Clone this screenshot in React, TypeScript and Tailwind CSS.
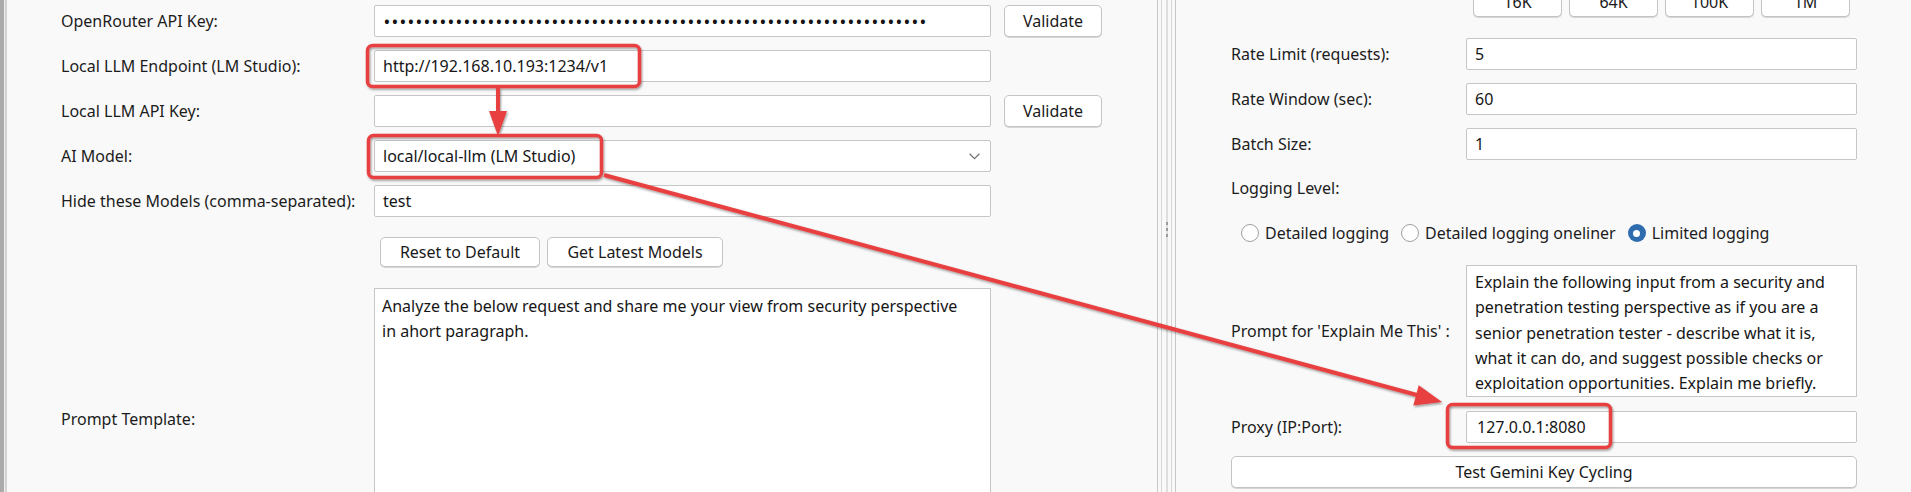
import React from "react";

const Field = ({ value, className = "" }: { value?: string; className?: string }) => (
  <div
    className={`h-[32px] bg-white border border-[#c6c6c6] rounded-[2px] flex items-center pl-[8px] text-[#161616] whitespace-nowrap ${className}`}
  >
    {value}
  </div>
);

const Btn = ({ label, className = "" }: { label: string; className?: string }) => (
  <button
    type="button"
    className={`bg-white border border-[#c4c4c4] rounded-[5px] shadow-[0_1px_0_#d6d6d6] flex items-center justify-center text-[#1a1a1a] whitespace-nowrap ${className}`}
  >
    {label}
  </button>
);

const Radio = ({ label, checked }: { label: string; checked?: boolean }) => (
  <div className="flex items-center gap-[6px]">
    {checked ? (
      <span className="w-[18px] h-[18px] rounded-full bg-[#2f6cae] flex items-center justify-center">
        <span className="w-[7px] h-[7px] rounded-full bg-white" />
      </span>
    ) : (
      <span className="w-[18px] h-[18px] rounded-full border border-[#a0a0a0] bg-white" />
    )}
    <span>{label}</span>
  </div>
);

const LeftRow = ({ label, children }: { label: string; children: React.ReactNode }) => (
  <div className="flex items-center h-[32px]">
    <div className="w-[313px] whitespace-nowrap">{label}</div>
    {children}
  </div>
);

const RightRow = ({ label, children, className = "" }: { label: string; children: React.ReactNode; className?: string }) => (
  <div className={`flex items-center ${className}`}>
    <div className="w-[235px] whitespace-nowrap">{label}</div>
    {children}
  </div>
);

export default function App() {
  const dots = Array.from({ length: 68 });

  return (
    <div className="relative w-[1911px] h-[492px] overflow-hidden bg-[#f9f9f9] flex font-['Noto_Sans',sans-serif] text-[16px] text-[#1c1c1c]">
      {/* window edge */}
      <div className="flex h-full">
        <div className="w-[4px] bg-[#ababab]" />
        <div className="w-[1px] bg-[#efefef]" />
        <div className="w-[2px] bg-[#d3d3d3]" />
      </div>

      {/* left panel */}
      <div className="w-[1150px] flex flex-col pt-[5px] pl-[54px]">
        <div className="flex flex-col gap-[13px]">
          <LeftRow label="OpenRouter API Key:">
            <div className="w-[617px] h-[32px] bg-white border border-[#c6c6c6] rounded-[2px] flex items-center pl-[8px] text-[18px] text-[#111]">
              {dots.map((_, i) => (
                <span key={i} className="w-[8px] text-center leading-none">•</span>
              ))}
            </div>
            <Btn label="Validate" className="ml-[13px] w-[98px] h-[32px]" />
          </LeftRow>
          <LeftRow label="Local LLM Endpoint (LM Studio):">
            <Field value="http://192.168.10.193:1234/v1" className="w-[617px]" />
          </LeftRow>
          <LeftRow label="Local LLM API Key:">
            <Field className="w-[617px]" />
            <Btn label="Validate" className="ml-[13px] w-[98px] h-[32px]" />
          </LeftRow>
          <LeftRow label="AI Model:">
            <div className="w-[617px] h-[32px] bg-white border border-[#c6c6c6] rounded-[2px] flex items-center justify-between pl-[8px] pr-[10px] text-[#161616]">
              <span>local/local-llm (LM Studio)</span>
              <svg width="11" height="7" viewBox="0 0 11 7">
                <polyline points="0.6,0.8 5.5,5.6 10.4,0.8" fill="none" stroke="#6f6f6f" strokeWidth="1.2" />
              </svg>
            </div>
          </LeftRow>
          <LeftRow label="Hide these Models (comma-separated):">
            <Field value="test" className="w-[617px]" />
          </LeftRow>
        </div>

        <div className="flex mt-[20px] h-[30px]">
          <div className="w-[319px]" />
          <div className="flex gap-[7px]">
            <Btn label="Reset to Default" className="w-[160px] h-[30px]" />
            <Btn label="Get Latest Models" className="w-[176px] h-[30px]" />
          </div>
        </div>

        <div className="flex items-center mt-[21px]">
          <div className="w-[313px]">Prompt Template:</div>
          <div className="w-[617px] h-[262px] bg-white border border-[#c6c6c6] pt-[5px] pl-[7px] leading-[25px] text-[#161616]">
            <div>Analyze the below request and share me your view from security perspective</div>
            <div>in ahort paragraph.</div>
          </div>
        </div>
      </div>

      {/* split divider */}
      <div className="w-[19px] h-full flex justify-between">
        <div className="w-[1px] bg-[#c8c8c8]" />
        <div className="w-[1px] bg-[#d6d6d6]" />
        <div className="w-[2px] flex flex-col items-center pt-[222px] gap-[3px] bg-[#dedede]">
          <span className="w-[2px] h-[3px] bg-[#9c9c9c]" />
          <span className="w-[2px] h-[3px] bg-[#9c9c9c]" />
          <span className="w-[2px] h-[3px] bg-[#9c9c9c]" />
        </div>
        <div className="w-[1px] bg-[#d6d6d6]" />
        <div className="w-[1px] bg-[#c8c8c8]" />
      </div>

      {/* right panel */}
      <div className="flex-1 flex flex-col pl-[55px]">
        <div className="flex -mt-[13px] h-[30px]">
          <div className="w-[235px]" />
          <div className="w-[391px] flex justify-center gap-[7px]">
            {["16K", "64K", "100K", "1M"].map((t) => (
              <Btn key={t} label={t} className="w-[89px] h-[30px]" />
            ))}
          </div>
        </div>

        <RightRow label="Rate Limit (requests):" className="mt-[21px]">
          <Field value="5" className="w-[391px]" />
        </RightRow>
        <RightRow label="Rate Window (sec):" className="mt-[13px]">
          <Field value="60" className="w-[391px]" />
        </RightRow>
        <RightRow label="Batch Size:" className="mt-[13px]">
          <Field value="1" className="w-[391px]" />
        </RightRow>

        <div className="mt-[13px] h-[30px] flex items-center">Logging Level:</div>

        <div className="mt-[17px] h-[26px] flex items-center gap-[12px] pl-[10px]">
          <Radio label="Detailed logging" />
          <Radio label="Detailed logging oneliner" />
          <Radio label="Limited logging" checked />
        </div>

        <RightRow label="Prompt for 'Explain Me This' :" className="mt-[19px]">
          <div className="w-[391px] h-[132px] bg-white border border-[#c6c6c6] pt-[4px] pl-[8px] leading-[25.3px] text-[#161616] whitespace-nowrap">
            <div>Explain the following input from a security and</div>
            <div>penetration testing perspective as if you are a</div>
            <div>senior penetration tester - describe what it is,</div>
            <div>what it can do, and suggest possible checks or</div>
            <div>exploitation opportunities. Explain me briefly.</div>
          </div>
        </RightRow>

        <RightRow label="Proxy (IP:Port):" className="mt-[14px]">
          <Field value="127.0.0.1:8080" className="w-[391px] pl-[10px]" />
        </RightRow>

        <Btn label="Test Gemini Key Cycling" className="mt-[13px] w-[626px] h-[32px]" />
      </div>

      {/* red annotations */}
      <svg
        className="absolute left-0 top-0 pointer-events-none"
        width={1911}
        height={492}
        viewBox="0 0 1911 492"
      >
        <defs>
          <filter id="sh" filterUnits="userSpaceOnUse" x="0" y="0" width="1911" height="492">
            <feDropShadow dx="1" dy="1.5" stdDeviation="1" floodColor="#000" floodOpacity="0.4" />
          </filter>
        </defs>
        <g filter="url(#sh)">
          <g stroke="#e8403f" fill="none" strokeWidth={3.5}>
            <rect x={367.5} y={45.5} width={272} height={41} rx={5} />
            <rect x={368.5} y={135.5} width={233} height={42} rx={5} />
            <rect x={1447.5} y={404.5} width={163} height={43} rx={5} />
          </g>
          <g stroke="#e8403f" strokeWidth={4} strokeLinecap="butt">
            <line x1={498} y1={88} x2={498} y2={114} />
            <line x1={604} y1={175} x2={1417} y2={395} />
          </g>
          <g fill="#e8403f">
            <polygon points="498,136 489,111 507,111" />
            <polygon points="1442,402 1413.3,405.4 1418.7,385.2" />
          </g>
        </g>
      </svg>
    </div>
  );
}
